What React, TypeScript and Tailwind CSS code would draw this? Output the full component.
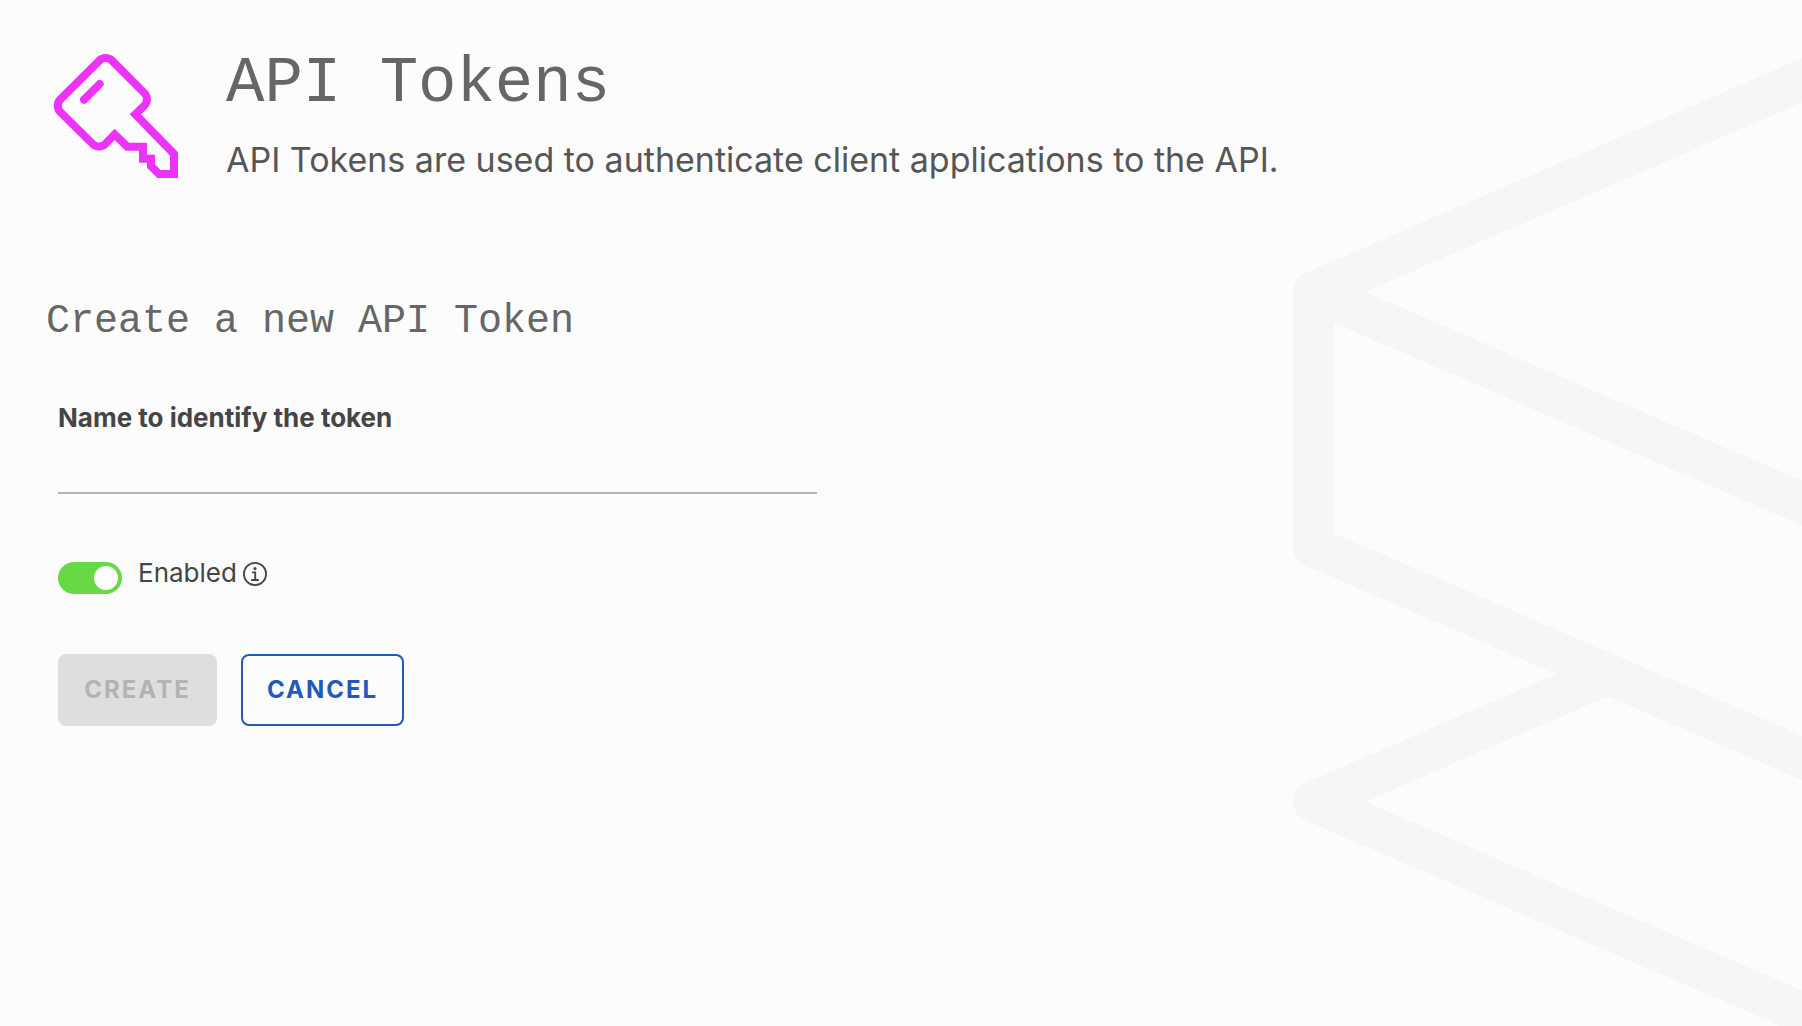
import React, { useState } from 'react';

function KeyIcon() {
  return (
    <svg
      viewBox="18 18 408 408"
      className="w-[136px] h-[136px] shrink-0 text-[#ed32fa]"
      fill="none"
      stroke="currentColor"
      strokeWidth="24"
      aria-hidden="true"
    >
      <path d="M178 62A27 27 0 0 1 216 62L313 159A27 27 0 0 1 313 197L286 223L402 342V402H357L333 378V356H309V320H262L224 283L196 312A27 27 0 0 1 158 312L61 216A27 27 0 0 1 61 178Z" />
      <path d="M132 179L179 132" strokeLinecap="round" />
    </svg>
  );
}

function InfoIcon() {
  return (
    <svg viewBox="0 0 24 24" className="w-6 h-6" fill="none" stroke="currentColor" aria-hidden="true">
      <circle cx="12" cy="12" r="11.1" strokeWidth="1.8" />
      <circle cx="12" cy="6.6" r="1.6" fill="currentColor" stroke="none" />
      <path d="M9 10.4H12.2V18M8.2 18H15.8" strokeWidth="1.9" />
    </svg>
  );
}

function BackgroundLines() {
  return (
    <svg
      viewBox="1280 0 522 1026"
      className="absolute right-0 top-0 h-full pointer-events-none"
      fill="none"
      stroke="#f6f6f6"
      strokeWidth="41"
      strokeLinejoin="round"
      aria-hidden="true"
    >
      <path d="M1902 37.2L1313.5 291.8L1902 546.4" />
      <path d="M1313.5 291.8V546.7L1902 801.3" />
      <path d="M1608 674.2L1313.5 801.6L1902 1056.2" />
    </svg>
  );
}

function App() {
  const [name, setName] = useState('');
  const [enabled, setEnabled] = useState(true);

  return (
    <div className="relative min-h-screen overflow-hidden bg-[#fcfcfc] text-[#454545] font-['Inter',sans-serif]">
      <BackgroundLines />

      <main className="relative px-[46px] pt-[46px] pb-12">
        {/* Header */}
        <header className="flex items-start gap-11">
          <KeyIcon />
          <div>
            <h1 className="font-['Liberation_Mono',monospace] text-[64px] leading-[76px] text-[#666666]">API Tokens</h1>
            <p className="mt-3.5 text-[34px] leading-[48px] text-[#565656]">
              API Tokens are used to authenticate client applications to the API.
            </p>
          </div>
        </header>

        <h2 className="mt-[114px] font-['Liberation_Mono',monospace] text-[40px] leading-[48px] text-[#666666]">
          Create a new API Token
        </h2>

        {/* Token form */}
        <form className="pl-3 pt-14" onSubmit={(e) => e.preventDefault()}>
          <div className="flex flex-col max-w-[759px]">
            <label htmlFor="token-name" className="text-[26px] leading-[32px] font-bold">
              Name to identify the token
            </label>
            <input
              id="token-name"
              type="text"
              value={name}
              onChange={(e) => setName(e.target.value)}
              className="mt-3 h-12 bg-transparent text-[26px] border-b-2 border-[#b3b3b3] outline-none"
            />
          </div>

          <div className="mt-16 flex items-start">
            <input
              id="token-enabled"
              type="checkbox"
              role="switch"
              checked={enabled}
              onChange={(e) => setEnabled(e.target.checked)}
              className="mt-1 h-8 w-16 p-1 appearance-none flex rounded-full bg-[#b3b3b3] checked:bg-[#66d944] checked:justify-end before:block before:size-6 before:rounded-full before:bg-white"
            />
            <label htmlFor="token-enabled" className="ml-4 text-[26px] leading-[30px]">
              Enabled
            </label>
            <button type="button" aria-label="About enabled tokens" className="ml-1.5 mt-1">
              <InfoIcon />
            </button>
          </div>

          <div className="mt-15 flex gap-6">
            <button
              type="submit"
              disabled={!name}
              className="h-[72px] w-[159px] rounded-lg bg-[#dedede] text-[24px] font-bold tracking-[2px] text-[#b3b3b3] enabled:bg-[#2359b8] enabled:text-white"
            >
              CREATE
            </button>
            <button
              type="button"
              className="h-[72px] w-[163px] rounded-lg border-2 border-[#2359b8] text-[24px] font-bold tracking-[2px] text-[#2359b8]"
            >
              CANCEL
            </button>
          </div>
        </form>
      </main>
    </div>
  );
}

export default App;
